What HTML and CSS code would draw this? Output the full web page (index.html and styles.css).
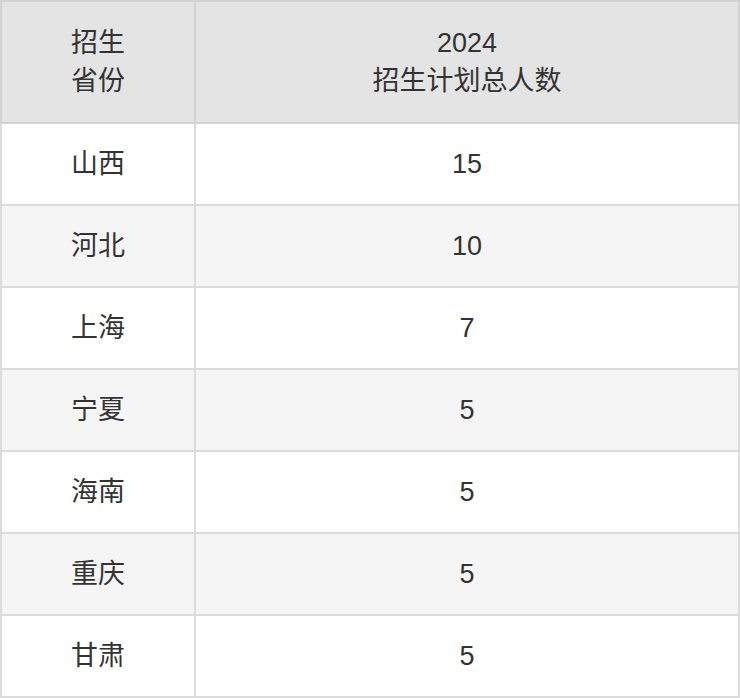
FILE: index.html
```html
<!DOCTYPE html>
<html lang="zh-CN">
<head>
<meta charset="utf-8">
<title>招生计划</title>
<link rel="stylesheet" href="styles.css">
</head>
<body>
<table class="plan">
  <thead>
    <tr>
      <th class="col-prov">招生<br>省份</th>
      <th class="col-num">2024<br>招生计划总人数</th>
    </tr>
  </thead>
  <tbody>
    <tr><td>山西</td><td>15</td></tr>
    <tr><td>河北</td><td>10</td></tr>
    <tr><td>上海</td><td>7</td></tr>
    <tr><td>宁夏</td><td>5</td></tr>
    <tr><td>海南</td><td>5</td></tr>
    <tr><td>重庆</td><td>5</td></tr>
    <tr><td>甘肃</td><td>5</td></tr>
  </tbody>
</table>
</body>
</html>
```
FILE: styles.css
```css
html, body {
  margin: 0;
  padding: 0;
  background: #ffffff;
}

.plan {
  border-collapse: collapse;
  width: 740px;
  table-layout: fixed;
  font-family: "Liberation Sans", "Noto Sans CJK SC", sans-serif;
  font-size: 27px;
  color: #333333;
}

.plan th,
.plan td {
  border: 2px solid #dcdcdc;
  text-align: center;
  vertical-align: middle;
  padding: 0;
  font-weight: normal;
}

.plan th {
  background: #e4e4e4;
  border-color: #d2d2d2;
  height: 120px;
  line-height: 38px;
}

.plan .col-prov {
  width: 192px;
}

.plan td {
  height: 80px;
  line-height: 30px;
}

.plan tbody tr:nth-child(odd) td {
  background: #ffffff;
}

.plan tbody tr:nth-child(even) td {
  background: #f5f5f5;
}
```
